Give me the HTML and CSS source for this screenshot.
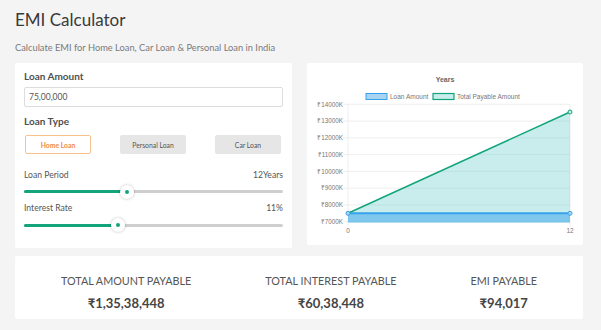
FILE: index.html
```html
<!DOCTYPE html>
<html lang="en">
<head>
<meta charset="utf-8">
<title>EMI Calculator</title>
<link rel="stylesheet" href="styles.css">
</head>
<body>
<div class="page">
  <h1 class="title">EMI Calculator</h1>
  <p class="subtitle">Calculate EMI for Home Loan, Car Loan &amp; Personal Loan in India</p>
  <div class="grid">
    <section class="card form">
      <div class="label">Loan Amount</div>
      <div class="input">75,00,000</div>
      <div class="label type-label">Loan Type</div>
      <div class="types">
        <button class="btn active">Home Loan</button>
        <button class="btn">Personal Loan</button>
        <button class="btn">Car Loan</button>
      </div>
      <div class="row period"><span>Loan Period</span><span>12Years</span></div>
      <div class="slider">
        <div class="track"><div class="fill" style="width:39.65%"></div></div>
        <div class="thumb" style="left:39.65%"></div>
      </div>
      <div class="row rate"><span>Interest Rate</span><span>11%</span></div>
      <div class="slider">
        <div class="track"><div class="fill" style="width:36.3%"></div></div>
        <div class="thumb" style="left:36.3%"></div>
      </div>
    </section>
    <section class="card chart">
      <svg class="chart-svg" viewBox="0 0 276 182" width="276" height="182">
        <text x="138" y="18.5" class="c-title">Years</text>
        <rect x="59" y="30.5" width="21" height="6" fill="#a9d3f1" stroke="#36a2eb" stroke-width="1"/>
        <text x="83" y="36" class="c-text">Loan Amount</text>
        <rect x="126" y="30.5" width="21" height="6" fill="#c9ecec" stroke="#13a57a" stroke-width="1.2"/>
        <text x="150" y="36" class="c-text">Total Payable Amount</text>
        <g class="grid-lines">
          <line x1="36" y1="41.3" x2="263" y2="41.3"/>
          <line x1="36" y1="58.1" x2="263" y2="58.1"/>
          <line x1="36" y1="74.8" x2="263" y2="74.8"/>
          <line x1="36" y1="91.6" x2="263" y2="91.6"/>
          <line x1="36" y1="108.4" x2="263" y2="108.4"/>
          <line x1="36" y1="125.2" x2="263" y2="125.2"/>
          <line x1="36" y1="141.9" x2="263" y2="141.9"/>
          <line x1="36" y1="158.7" x2="263" y2="158.7"/>
          <line x1="41" y1="41.3" x2="41" y2="163"/>
          <line x1="263" y1="41.3" x2="263" y2="163"/>
        </g>
        <g class="c-axis">
          <text x="36" y="43.5">₹14000K</text>
          <text x="36" y="60.3">₹13000K</text>
          <text x="36" y="77">₹12000K</text>
          <text x="36" y="93.8">₹11000K</text>
          <text x="36" y="110.6">₹10000K</text>
          <text x="36" y="127.4">₹9000K</text>
          <text x="36" y="144.1">₹8000K</text>
          <text x="36" y="160.9">₹7000K</text>
        </g>
        <text x="41" y="170" class="c-x">0</text>
        <text x="263" y="170" class="c-x">12</text>
        <polygon points="41,150.3 263,49 263,159.5 41,159.5" fill="rgba(75,192,192,0.3)"/>
        <rect x="41" y="150.3" width="222" height="9.2" fill="rgba(54,162,235,0.5)"/>
        <line x1="41" y1="150.3" x2="263" y2="150.3" stroke="#36a2eb" stroke-width="2"/>
        <line x1="41" y1="150.3" x2="263" y2="49" stroke="#12a47a" stroke-width="1.5"/>
        <circle cx="41" cy="150.3" r="2" fill="#a9d3f1" stroke="#36a2eb" stroke-width="1"/>
        <circle cx="263" cy="150.3" r="2" fill="#a9d3f1" stroke="#36a2eb" stroke-width="1"/>
        <circle cx="263" cy="49" r="2" fill="#c9ecec" stroke="#12a47a" stroke-width="1"/>
      </svg>
    </section>
  </div>
  <section class="card summary">
    <div class="sum-item">
      <div class="sum-label">TOTAL AMOUNT PAYABLE</div>
      <div class="sum-value">₹1,35,38,448</div>
    </div>
    <div class="sum-item">
      <div class="sum-label">TOTAL INTEREST PAYABLE</div>
      <div class="sum-value">₹60,38,448</div>
    </div>
    <div class="sum-item">
      <div class="sum-label">EMI PAYABLE</div>
      <div class="sum-value">₹94,017</div>
    </div>
  </section>
</div>
</body>
</html>
```
FILE: styles.css
```css
html, body {
  margin: 0;
  background: #f4f4f4;
  font-family: Lato, "Open Sans", "DejaVu Sans", sans-serif;
  color: #555;
}
.page {
  padding: 0 18px 0 15px;
}
.title {
  margin: 9px 0 0;
  font-size: 17px;
  font-weight: 400;
  line-height: 22px;
  color: #3a3a3a;
}
.subtitle {
  margin: 11px 0 0;
  font-size: 9.3px;
  line-height: 12px;
  color: #7a7a7a;
}
.grid {
  display: grid;
  grid-template-columns: 277px 276px;
  column-gap: 15px;
  margin-top: 9px;
  align-items: start;
}
.card {
  background: #fff;
  border-radius: 2px;
}
.form {
  padding: 6px 9px 15px;
}
.label {
  font-size: 10px;
  font-weight: 700;
  line-height: 14px;
  color: #505050;
}
.input {
  margin-top: 4px;
  height: 20px;
  box-sizing: border-box;
  border: 1px solid #ddd;
  border-radius: 2px;
  padding-left: 4px;
  font-size: 8.5px;
  line-height: 18px;
  color: #555;
}
.type-label {
  margin-top: 7px;
}
.types {
  display: flex;
  justify-content: space-between;
  padding: 0 2px 0 1px;
  margin-top: 7px;
}
.btn {
  width: 66px;
  height: 19px;
  box-sizing: border-box;
  border: 0;
  border-radius: 2px;
  background: #e6e6e6;
  font-family: inherit;
  font-size: 6.8px;
  color: #555;
  padding: 0;
  display: flex;
  align-items: center;
  justify-content: center;
}
.btn.active {
  background: #fff;
  border: 1px solid #f9c18e;
  color: #f18a3c;
  font-weight: 700;
}
.row {
  display: flex;
  justify-content: space-between;
  font-size: 8.6px;
  line-height: 12px;
  color: #555;
}
.period {
  margin-top: 14.7px;
}
.rate {
  margin-top: 2.4px;
}
.slider {
  position: relative;
  height: 16px;
  margin-top: 3px;
  display: flex;
  align-items: center;
}
.track {
  width: 100%;
  height: 3px;
  background: #cfcfcf;
  border-radius: 2px;
}
.fill {
  height: 100%;
  background: #12a47a;
  border-radius: 2px;
}
.thumb {
  position: absolute;
  top: 50%;
  width: 14px;
  height: 14px;
  margin: -7px 0 0 -7px;
  border-radius: 50%;
  background: #fff;
  box-shadow: 0 0 3px rgba(0, 0, 0, 0.25);
  display: flex;
  align-items: center;
  justify-content: center;
}
.thumb::after {
  content: "";
  width: 4px;
  height: 4px;
  border-radius: 50%;
  background: #12a47a;
}
.chart {
  height: 182px;
}
.chart-svg {
  display: block;
  font-family: "Liberation Sans", Arial, sans-serif;
}
.c-title {
  font-size: 7px;
  font-weight: 700;
  fill: #666;
  text-anchor: middle;
}
.c-text {
  font-size: 6.5px;
  fill: #777;
}
.c-axis text {
  font-size: 6.3px;
  fill: #777;
  text-anchor: end;
}
.c-x {
  font-size: 6.5px;
  fill: #777;
  text-anchor: middle;
}
.grid-lines line {
  stroke: #ebebeb;
  stroke-width: 0.8;
}
.summary {
  margin-top: 8px;
  height: 63px;
  box-sizing: border-box;
  padding: 18px 9px 0;
  display: flex;
  justify-content: space-around;
  text-align: center;
}
.sum-label {
  font-size: 10.8px;
  line-height: 14px;
  color: #555;
}
.sum-value {
  margin-top: 7px;
  font-size: 13px;
  font-weight: 700;
  line-height: 17px;
  color: #454545;
}
```
